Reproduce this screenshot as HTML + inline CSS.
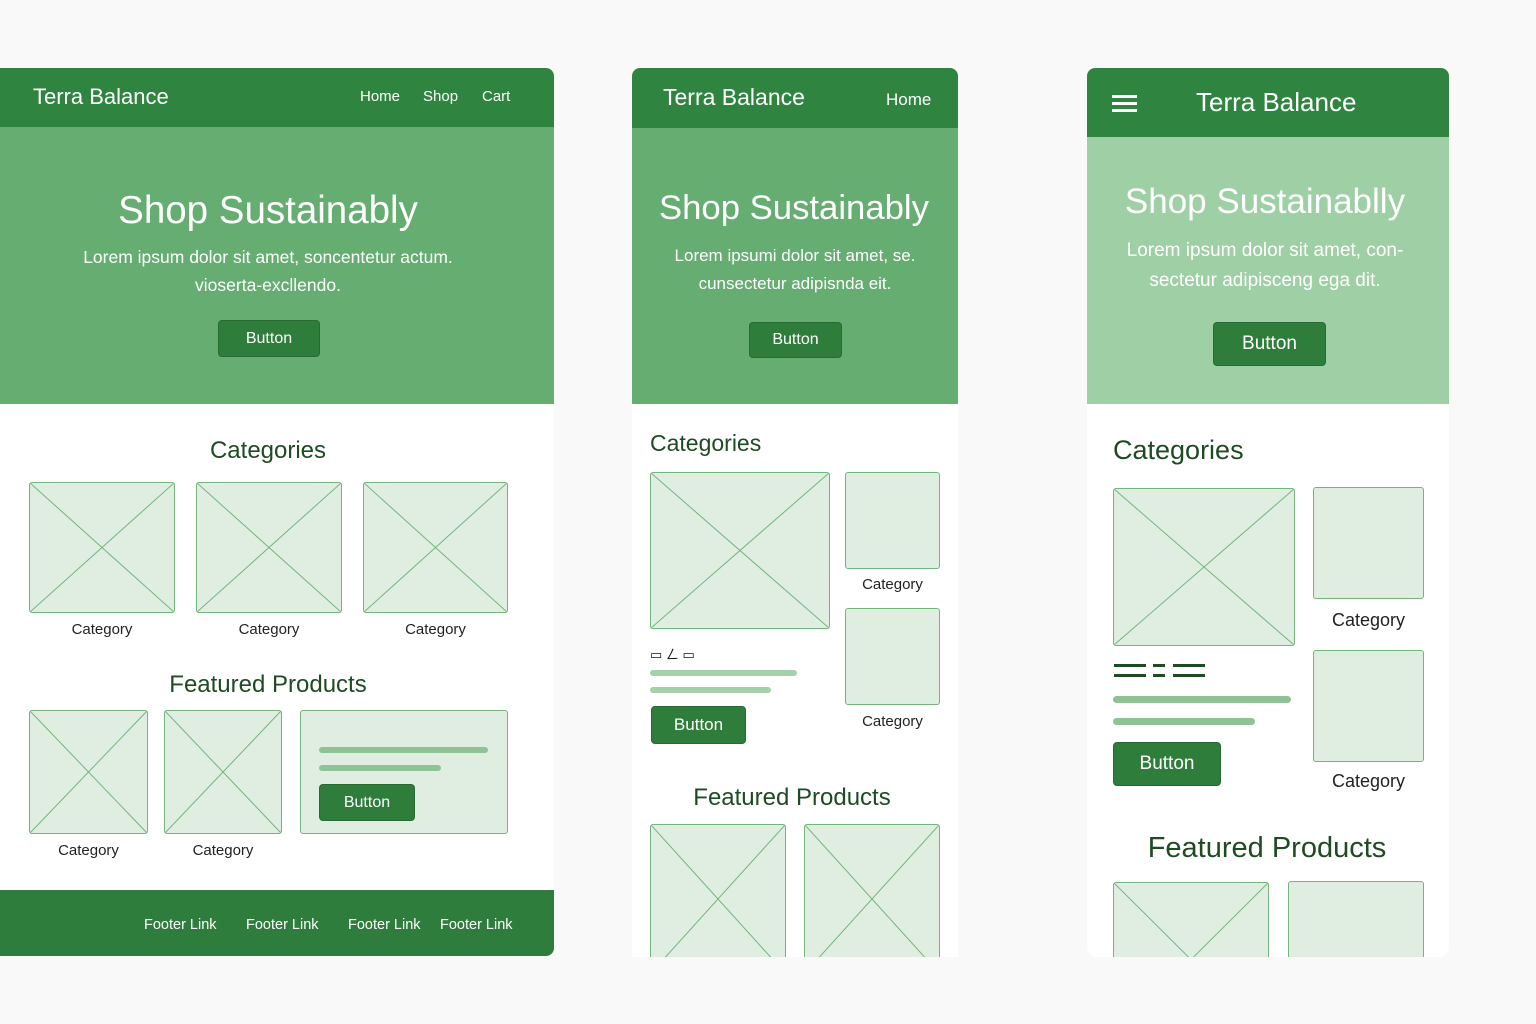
<!DOCTYPE html>
<html><head><meta charset="utf-8"><style>
*{margin:0;padding:0;box-sizing:border-box}
body{width:1536px;height:1024px;background:#f9f9f9;position:relative;overflow:hidden;font-family:"Liberation Sans",sans-serif}
.a{position:absolute}
.card{position:absolute;background:#fff;overflow:hidden}
.hdr{position:absolute;left:0;right:0;top:0;background:#2f8540;color:#fff}
.t{position:absolute;white-space:nowrap}
.ph{position:absolute;background:#e0eee1;border:1.5px solid #74b47d;border-radius:3px}
.ph svg{position:absolute;left:0;top:0;width:100%;height:100%}
.btn{position:absolute;background:#2e7d3b;color:#fff;border-radius:4px;border:1px solid #276b33;display:flex;align-items:center;justify-content:center}
.bar{position:absolute;background:#a5d0aa;border-radius:4px}
.cap{position:absolute;font-size:15px;color:#222;text-align:center}
.h2{position:absolute;color:#1e4a24;white-space:nowrap}
</style></head><body>
<svg width="0" height="0" style="position:absolute"><defs><symbol id="x" viewBox="0 0 100 100" preserveAspectRatio="none"><path d="M0 0L100 100M100 0L0 100" stroke="#74b47d" stroke-width="1" vector-effect="non-scaling-stroke" fill="none"/></symbol></defs></svg>

<!-- Card 1 -->
<div class="card" style="left:0;top:68px;width:554px;height:888px;border-radius:0 8px 8px 0">
 <div class="hdr" style="height:59px"></div>
 <div class="t" style="left:33px;top:16px;font-size:22px;color:#fff">Terra Balance</div>
 <div class="t" style="left:360px;top:20px;font-size:15px;color:#fff">Home</div>
 <div class="t" style="left:423px;top:20px;font-size:15px;color:#fff">Shop</div>
 <div class="t" style="left:482px;top:20px;font-size:15px;color:#fff">Cart</div>
 <div class="a" style="left:0;top:59px;width:554px;height:277px;background:#65ad71"></div>
 <div class="t" style="left:0;width:536px;text-align:center;top:121px;font-size:38.5px;color:#fff">Shop Sustainably</div>
 <div class="t" style="left:0;width:536px;text-align:center;top:175px;font-size:17.5px;line-height:28px;color:#fff">Lorem ipsum dolor sit amet, soncentetur actum.<br>vioserta-excllendo.</div>
 <div class="btn" style="left:218px;top:252px;width:102px;height:37px;font-size:16px">Button</div>
 <div class="h2" style="left:0;width:536px;text-align:center;top:369px;font-size:24px">Categories</div>
 <div class="ph" style="left:29px;top:414px;width:146px;height:131px"><svg><use href="#x"/></svg></div>
 <div class="ph" style="left:196px;top:414px;width:146px;height:131px"><svg><use href="#x"/></svg></div>
 <div class="ph" style="left:363px;top:414px;width:145px;height:131px"><svg><use href="#x"/></svg></div>
 <div class="cap" style="left:29px;width:146px;top:553px">Category</div>
 <div class="cap" style="left:196px;width:146px;top:553px">Category</div>
 <div class="cap" style="left:363px;width:145px;top:553px">Category</div>
 <div class="h2" style="left:0;width:536px;text-align:center;top:603px;font-size:24px">Featured Products</div>
 <div class="ph" style="left:29px;top:642px;width:119px;height:124px"><svg><use href="#x"/></svg></div>
 <div class="ph" style="left:164px;top:642px;width:118px;height:124px"><svg><use href="#x"/></svg></div>
 <div class="ph" style="left:300px;top:642px;width:208px;height:124px"></div>
 <div class="bar" style="left:319px;top:679px;width:169px;height:6px;background:#8fc297"></div>
 <div class="bar" style="left:319px;top:697px;width:122px;height:6px;background:#8fc297"></div>
 <div class="btn" style="left:319px;top:716px;width:96px;height:37px;font-size:16px">Button</div>
 <div class="cap" style="left:29px;width:119px;top:774px">Category</div>
 <div class="cap" style="left:164px;width:118px;top:774px">Category</div>
 <div class="a" style="left:0;top:822px;width:554px;height:66px;background:#2f7d3c"></div>
 <div class="t" style="left:144px;top:849px;font-size:14.5px;color:#fff">Footer Link</div>
 <div class="t" style="left:246px;top:849px;font-size:14.5px;color:#fff">Footer Link</div>
 <div class="t" style="left:348px;top:849px;font-size:14.5px;color:#fff">Footer Link</div>
 <div class="t" style="left:440px;top:849px;font-size:14.5px;color:#fff">Footer Link</div>
</div>

<!-- Card 2 -->
<div class="card" style="left:632px;top:68px;width:326px;height:889px;border-radius:8px 8px 0 0">
 <div class="hdr" style="height:60px"></div>
 <div class="t" style="left:31px;top:16px;font-size:23px;color:#fff">Terra Balance</div>
 <div class="t" style="left:254px;top:22px;font-size:17px;color:#fff">Home</div>
 <div class="a" style="left:0;top:60px;width:326px;height:276px;background:#65ad71"></div>
 <div class="t" style="left:0;width:324px;text-align:center;top:121px;font-size:34.7px;color:#fff">Shop Sustainably</div>
 <div class="t" style="left:0;width:326px;text-align:center;top:174px;font-size:17px;line-height:28px;color:#fff">Lorem ipsumi dolor sit amet, se.<br>cunsectetur adipisnda eit.</div>
 <div class="btn" style="left:117px;top:254px;width:93px;height:36px;font-size:16px">Button</div>
 <div class="h2" style="left:18px;top:362px;font-size:23px">Categories</div>
 <div class="ph" style="left:18px;top:404px;width:180px;height:157px"><svg><use href="#x"/></svg></div>
 <div class="ph" style="left:213px;top:404px;width:95px;height:97px"></div>
 <div class="cap" style="left:213px;width:95px;top:508px">Category</div>
 <div class="ph" style="left:213px;top:540px;width:95px;height:97px"></div>
 <div class="cap" style="left:213px;width:95px;top:645px">Category</div>
 <div class="t" style="left:18px;top:576px;font-size:13px;color:#111">▭ ㄥ ▭</div>
 <div class="bar" style="left:18px;top:602px;width:147px;height:6px"></div>
 <div class="bar" style="left:18px;top:619px;width:121px;height:6px"></div>
 <div class="btn" style="left:19px;top:638px;width:95px;height:38px;font-size:17px">Button</div>
 <div class="h2" style="left:0;width:320px;text-align:center;top:716px;font-size:24px">Featured Products</div>
 <div class="ph" style="left:18px;top:756px;width:136px;height:150px"><svg><use href="#x"/></svg></div>
 <div class="ph" style="left:172px;top:756px;width:136px;height:150px"><svg><use href="#x"/></svg></div>
</div>

<!-- Card 3 -->
<div class="card" style="left:1087px;top:68px;width:362px;height:889px;border-radius:8px 8px 10px 10px">
 <div class="hdr" style="height:69px"></div>
 <div class="a" style="left:25px;top:27px;width:25px;height:3px;background:#fff"></div>
 <div class="a" style="left:25px;top:34px;width:25px;height:3px;background:#fff"></div>
 <div class="a" style="left:25px;top:41px;width:25px;height:3px;background:#fff"></div>
 <div class="t" style="left:109px;top:19px;font-size:26px;color:#fff">Terra Balance</div>
 <div class="a" style="left:0;top:69px;width:362px;height:267px;background:#9fcfa5"></div>
 <div class="t" style="left:0;width:356px;text-align:center;top:114px;font-size:35px;color:#fff">Shop Sustainablly</div>
 <div class="t" style="left:0;width:356px;text-align:center;top:168px;font-size:19px;line-height:30px;color:#fff">Lorem ipsum dolor sit amet, con-<br>sectetur adipisceng ega dit.</div>
 <div class="btn" style="left:126px;top:254px;width:113px;height:44px;font-size:19px">Button</div>
 <div class="h2" style="left:26px;top:367px;font-size:27px">Categories</div>
 <div class="ph" style="left:26px;top:420px;width:182px;height:158px"><svg><use href="#x"/></svg></div>
 <div class="ph" style="left:226px;top:419px;width:111px;height:112px"></div>
 <div class="cap" style="left:226px;width:111px;top:542px;font-size:18px">Category</div>
 <div class="ph" style="left:226px;top:582px;width:111px;height:112px"></div>
 <div class="cap" style="left:226px;width:111px;top:703px;font-size:18px">Category</div>
 <div class="a" style="left:27px;top:596px;width:32px;height:3px;background:#1e4a24"></div>
 <div class="a" style="left:27px;top:606px;width:32px;height:3px;background:#1e4a24"></div>
 <div class="a" style="left:66px;top:596px;width:12px;height:3px;background:#1e4a24"></div>
 <div class="a" style="left:66px;top:606px;width:12px;height:3px;background:#1e4a24"></div>
 <div class="a" style="left:86px;top:596px;width:32px;height:3px;background:#1e4a24"></div>
 <div class="a" style="left:86px;top:606px;width:32px;height:3px;background:#1e4a24"></div>
 <div class="bar" style="left:26px;top:628px;width:178px;height:7px;background:#8fc297"></div>
 <div class="bar" style="left:26px;top:650px;width:142px;height:7px;background:#8fc297"></div>
 <div class="btn" style="left:26px;top:674px;width:108px;height:44px;font-size:19px">Button</div>
 <div class="h2" style="left:0;width:360px;text-align:center;top:764px;font-size:29px">Featured Products</div>
 <div class="ph" style="left:26px;top:814px;width:156px;height:110px"><svg viewBox="0 0 156 110" preserveAspectRatio="none"><path d="M0 0L78 78L156 0" stroke="#74b47d" fill="none"/></svg></div>
 <div class="ph" style="left:201px;top:813px;width:136px;height:110px"></div>
</div>
</body></html>
